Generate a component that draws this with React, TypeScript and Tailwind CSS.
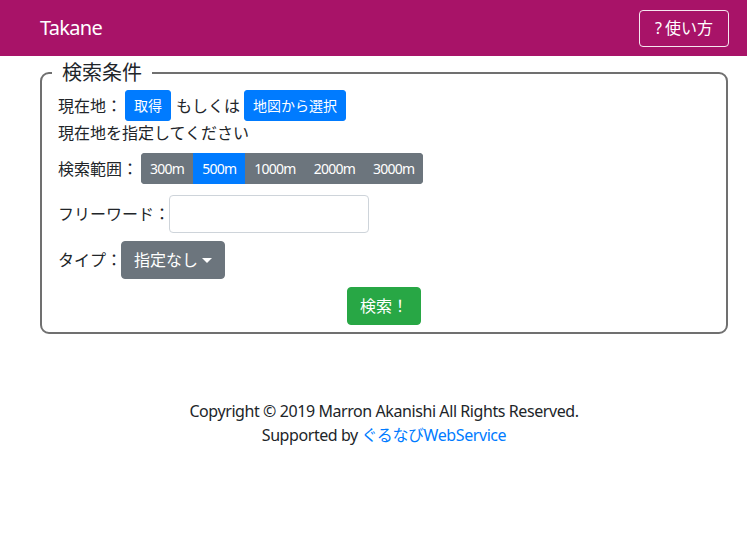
import React from "react";

const font = { fontFamily: '"Segoe UI", "Noto Sans", "Noto Sans CJK JP", sans-serif' };

export default function App() {
  const ranges = ["300m", "500m", "1000m", "2000m", "3000m"];
  return (
    <div className="min-h-[557px] bg-white text-[#212529] text-[16px] leading-[24px]" style={font}>
      <header className="h-[56px] bg-[#a81368] flex items-center justify-between pl-[40px] pr-[18px]">
        <span className="text-white text-[20px] leading-[30px] tracking-[-0.7px]">Takane</span>
        <button className="h-[37px] px-[15px] border border-white/90 rounded-[4px] text-white text-[16px] leading-[24px] flex items-center">
          <span>?</span>
          <span className="ml-[3px]">使い方</span>
        </button>
      </header>
      <main className="pl-[40px] pr-[19px] pt-[1px]">
        <fieldset className="border-2 border-[#707070] rounded-[9px] px-[16px] pb-[7px]">
          <legend className="ml-[-6px] px-[10px] text-[20px] leading-[32px]">検索条件</legend>
          <div className="flex items-center h-[31px] mt-[1px]">
            <span>現在地：</span>
            <button className="ml-[3px] h-[31px] px-[8px] border border-[#007bff] rounded-[3px] bg-[#007bff] text-white text-[14px] leading-[21px]">取得</button>
            <span className="mx-[5px]">もしくは</span>
            <button className="ml-[-1px] h-[31px] px-[8px] border border-[#007bff] rounded-[3px] bg-[#007bff] text-white text-[14px] leading-[21px]">地図から選択</button>
          </div>
          <div className="h-[24px]">現在地を指定してください</div>
          <div className="flex items-center mt-[8px]">
            <span>検索範囲：</span>
            <div className="ml-[3px] flex h-[31px] rounded-[4px] overflow-hidden">
              {ranges.map((r) => (
                <button
                  key={r}
                  className={
                    r === "500m"
                      ? "px-[8px] border border-[#007bff] bg-[#007bff] text-white text-[14px] leading-[21px] tracking-[-0.75px]"
                      : "px-[8px] border border-[#6c757d] bg-[#6c757d] text-white text-[14px] leading-[21px] tracking-[-0.75px]"
                  }
                >
                  {r}
                </button>
              ))}
            </div>
          </div>
          <div className="flex items-center mt-[11px]">
            <span>フリーワード：</span>
            <input className="ml-[-1px] w-[200px] h-[38px] border border-[#ced4da] rounded-[4px] px-[12px] outline-none" />
          </div>
          <div className="flex items-center mt-[8px]">
            <span>タイプ：</span>
            <button className="ml-[-1px] h-[38px] px-[12px] border border-[#6c757d] rounded-[4px] bg-[#6c757d] text-white flex items-center">
              指定なし
              <span className="ml-[4px] w-0 h-0 border-l-[5px] border-r-[5px] border-t-[5px] border-l-transparent border-r-transparent border-t-white" />
            </button>
          </div>
          <div className="flex justify-center mt-[8px]">
            <button className="h-[38px] px-[12px] border border-[#28a745] rounded-[4px] bg-[#28a745] text-white">検索！</button>
          </div>
        </fieldset>
        <footer className="mt-[65px] text-center tracking-[-0.42px]">
          <div>Copyright © 2019 Marron Akanishi All Rights Reserved.</div>
          <div>
            Supported by <a className="text-[#007bff]">ぐるなびWebService</a>
          </div>
        </footer>
      </main>
    </div>
  );
}
